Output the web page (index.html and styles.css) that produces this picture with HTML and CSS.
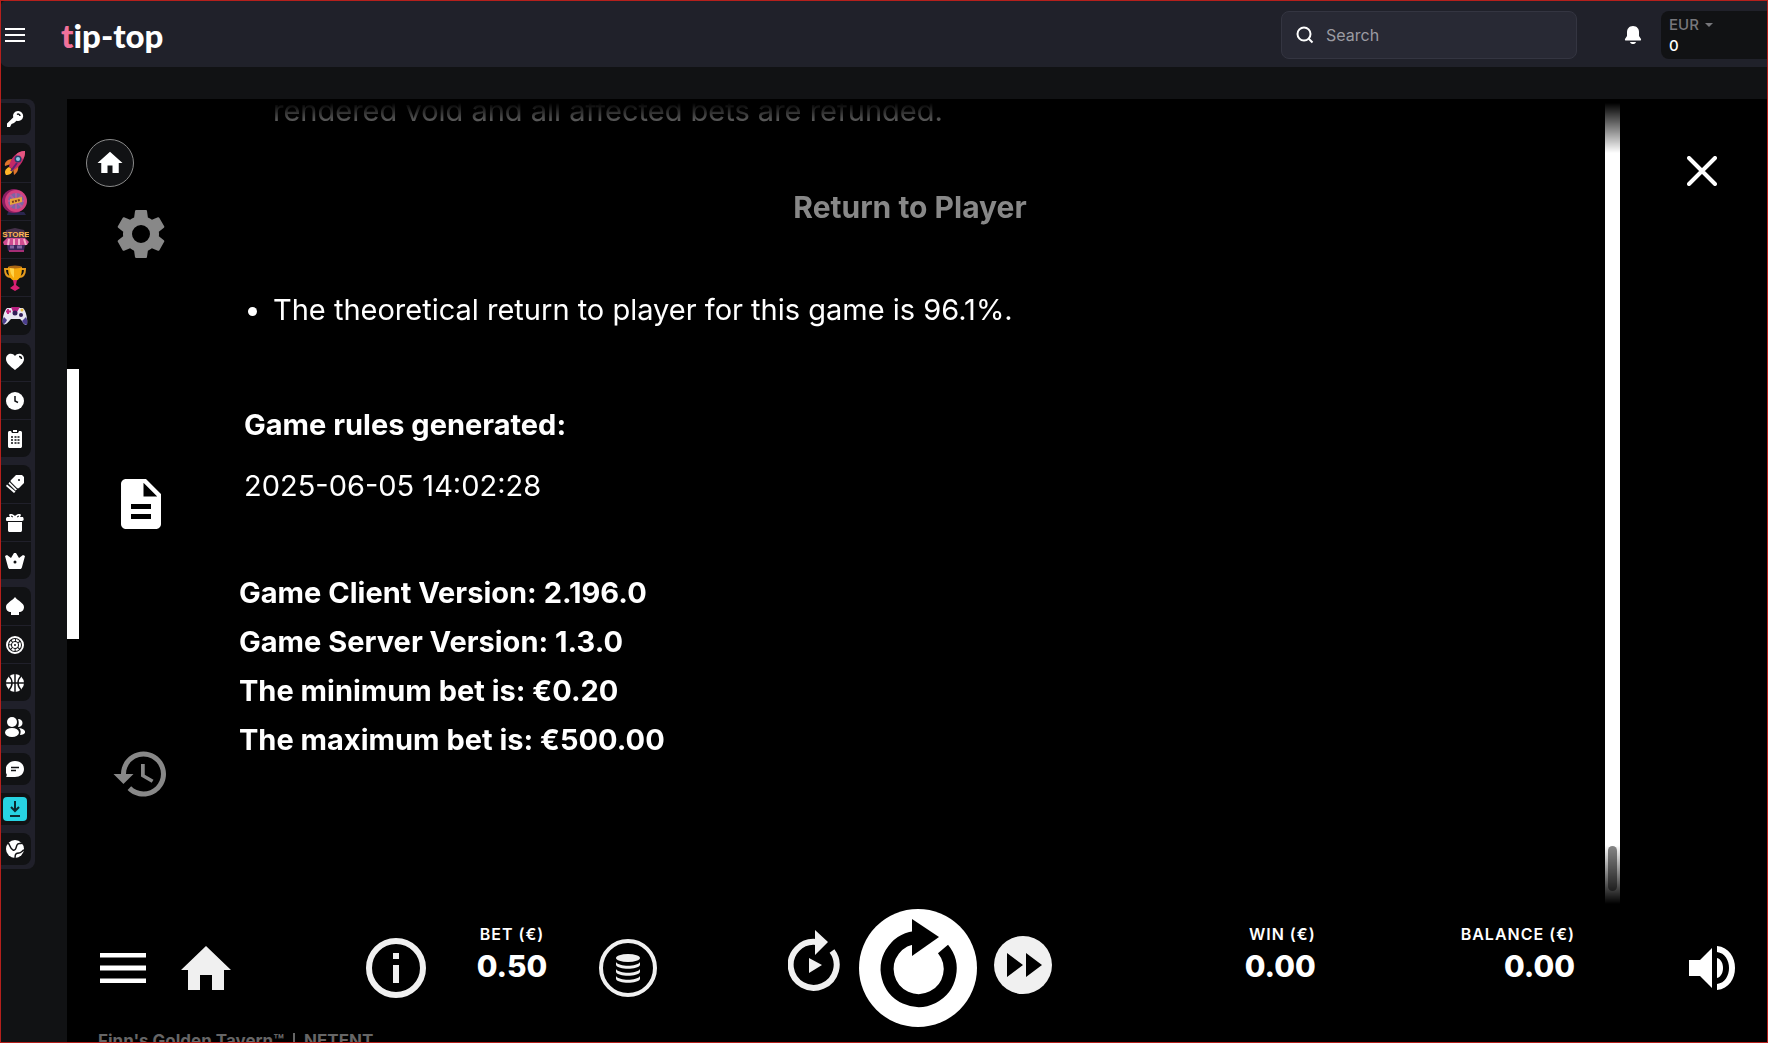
FILE: index.html
```html
<!DOCTYPE html>
<html lang="en">
<head>
    <meta charset="UTF-8">
    <title>tip-top</title>
    <link rel="stylesheet" href="styles.css">
</head>
<body>

<header class="header">
    <button class="menu-btn" aria-label="Menu">
        <svg width="20" height="14" viewBox="0 0 20 14"><path d="M0 1h20M0 7h20M0 13h20" stroke="#fff" stroke-width="2"/></svg>
    </button>
    <a class="logo" href="#"><span class="logo-t">t</span>ip-top</a>
    <label class="search">
        <svg width="18" height="18" viewBox="0 0 18 18" fill="none" stroke="#fff" stroke-width="2"><circle cx="8" cy="8" r="6.5"/><path d="M12.5 12.5l4 4"/></svg>
        <input type="text" placeholder="Search" aria-label="Search">
    </label>
    <button class="bell" aria-label="Notifications">
        <svg width="18" height="20" viewBox="0 0 18 20" fill="#fff"><path d="M9 1c-4 0-6 3-6 6v4l-2 3c-.3 1 .2 1.500 1 1.500h14c.8 0 1.300-.5 1-1.500l-2-3V7c0-3-2-6-6-6zM6 17h6c-.5 1.500-1.500 2-3 2s-2.500-.5-3-2z"/></svg>
    </button>
    <button class="wallet">
        <span class="currency">EUR <svg width="8" height="4" viewBox="0 0 8 4"><path d="M0 0h8L4 4z" fill="#77777b"/></svg></span>
        <span class="amount">0</span>
    </button>
</header>

<div class="main">
    <nav class="sidebar">
        <div class="group single">
            <a href="#" aria-label="Login"><svg width="20" height="20" viewBox="0 0 20 20"><path d="M13 2a5 5 0 0 0-4.800 6.500L2 14.500V18h3l1.500-3 2.500-1 2.500-2.300A5 5 0 1 0 13 2z" fill="#fff"/><path d="M12 5.500c1.500-1 3 0 3 1.500" stroke="#111214" stroke-width="1.500" fill="none"/></svg></a>
        </div>
        <div class="group promo">
            <a href="#" aria-label="Quests"><svg width="22" height="26" viewBox="0 0 22 26">
                <path d="M8 9C3 9 0 13 1 16l6-2zM14 15c1 5-1 8-4 10l-1-7z" fill="#e0742c"/>
                <path d="M21 1C13 1 6 8 5 17l5 3c7-4 11-11 11-19z" fill="#c42a68"/>
                <path d="M21 1c-4 0-7 1-9 4l7 4c2-3 2-5 2-8z" fill="#e55580"/>
                <circle cx="14" cy="9" r="3.500" fill="#27406c"/><circle cx="14" cy="9" r="2" fill="#8cc9e8"/>
                <path d="M5 17l4 3c-1 4-4 5-7 5-2-3-1-6 3-8z" fill="#ffb629"/>
                <path d="M13 13l-6 8" stroke="#5b2272" stroke-width="2"/>
            </svg></a>
            <a href="#" aria-label="Wheel"><svg width="26" height="28" viewBox="0 0 26 28">
                <path d="M6 24h16l2 3H5z" fill="#29264d"/>
                <circle cx="12" cy="13" r="12" fill="#8c1e62"/><circle cx="14" cy="13" r="11" fill="#d3427f"/>
                <circle cx="14" cy="13" r="8" fill="#7b67a3"/>
                <path d="M14 5v16M6 13h16M8 7l12 12M20 7L8 19" stroke="#b25b9f" stroke-width="2"/>
                <path d="M8 11l12-2v5L8 17z" fill="#e8a63b"/><path d="M10 14l8-2" stroke="#7a3c22" stroke-width="2" stroke-dasharray="2 1"/>
            </svg></a>
            <a href="#" aria-label="Store"><svg class="store" width="28" height="26" viewBox="0 0 28 26">
                <path d="M5 12h20l-2 12H7z" fill="#3b275c"/><path d="M2 15l4-4h18l4 4-2 3H3z" fill="#d04c91"/>
                <path d="M8 12l-1 6M13 12v6M18 12v6M23 12l2 6" stroke="#f3b0c9" stroke-width="2"/>
                <path d="M8 24h15" stroke="#a52e75" stroke-width="2"/><path d="M9 20h4M16 20h5" stroke="#83639f" stroke-width="3"/>
                <path d="M5 3l9-2 9 2 3 8H3z" fill="#45304a"/>
                <text x="15" y="10" text-anchor="middle" fill="#ffb751">STORE</text>
            </svg></a>
            <a href="#" aria-label="Tournaments"><svg width="22" height="26" viewBox="0 0 22 26">
                <path d="M5 4H1c0 5 2 8 6 8M17 4h4c0 5-2 8-6 8" fill="none" stroke="#e49a20" stroke-width="2"/>
                <path d="M4 2h14c0 8-2 13-7 14C6 15 4 10 4 2z" fill="#f6a90c"/><path d="M6 3h4v10C7 10 6 7 6 3z" fill="#ffd348"/>
                <ellipse cx="11" cy="2" rx="7" ry="1.500" fill="#a96614"/>
                <path d="M9 15h4l-1 5 4 3-5 3-5-3 4-3z" fill="#d81f72"/>
            </svg></a>
            <a href="#" aria-label="Games"><svg width="26" height="20" viewBox="0 0 26 20">
                <path d="M5 2h16c3 3 5 11 4 17-3 1-5-5-7-6H9c-2 2-5 7-8 5C0 12 2 5 5 2z" fill="#e8e6f1"/>
                <path d="M9 1h9l-3 5h-4z" fill="#b5227f"/><path d="M24 11c2 3 1 7 1 8-2 0-4-2-5-4zM2 11c-2 3-1 6-1 7 2 0 3-2 4-4z" fill="#4b3e8d"/>
                <circle cx="13" cy="7" r="2.500" fill="#311d58"/><circle cx="19" cy="9" r="2" fill="#311d58"/>
                <path d="M6 3v5M4 5.500h5" stroke="#c62a86" stroke-width="2"/><circle cx="20" cy="4" r="1.500" fill="#e8bd3d"/>
            </svg></a>
        </div>
        <div class="group">
            <a href="#" aria-label="Favourites"><svg width="20" height="18" viewBox="0 0 20 18"><path d="M10 17C5 13 1 10 1 6c0-5 6-7 9-3 3-4 9-2 9 3 0 4-4 7-9 11z" fill="#fff"/><path d="M14 3.500c1.500 0 2.500 1 2.500 2.500" stroke="#111214" stroke-width="1.500" fill="none"/></svg></a>
            <a href="#" aria-label="Recent"><svg width="18" height="18" viewBox="0 0 18 18"><circle cx="9" cy="9" r="9" fill="#fff"/><path d="M9 4v5l3 1.500" stroke="#111214" stroke-width="1.500" fill="none"/></svg></a>
            <a href="#" aria-label="History"><svg width="16" height="18" viewBox="0 0 16 18"><path d="M3 1h1l1 2h6l1-2h1c1.500 0 2 .5 2 2v13c0 1.500-.5 2-2 2H3c-1.500 0-2-.5-2-2V3c0-1.500.5-2 2-2zM6 0h4v2H6z" fill="#fff"/><path d="M4 7h2M7.500 7h5M4 10h2M7.500 10h5M4 13h2M7.500 13h5" stroke="#111214" stroke-width="1.500" stroke-dasharray="2 1"/></svg></a>
        </div>
        <div class="group">
            <a href="#" aria-label="Promotions"><svg width="18" height="18" viewBox="0 0 18 18" fill="#fff"><path d="M10 0h6l2 2v6l-5 5c-.6.600-1.400.600-2 0L5 7c-.6-.6-.6-1.400 0-2zM3.500 7l7.500 7.500-1.500 1L2.500 8.500zM1 9.500l8.500 7-1.500 1.500-8-7z"/><circle cx="13" cy="5" r="1" fill="#111214"/></svg></a>
            <a href="#" aria-label="Gifts"><svg width="18" height="18" viewBox="0 0 18 18" fill="#fff"><path d="M2 8h14v8c0 1.500-.5 2-2 2H4c-1.500 0-2-.5-2-2zM1 3h3l-1-2c1-2 4-1 6 1 2-2 5-3 6-1l-1 2h3c1 2 1 4-1 4H1C-.5 7-.5 4 1 3z"/><path d="M5 2l2 1M13 2l-2 1" stroke="#111214"/></svg></a>
            <a href="#" aria-label="VIP"><svg width="20" height="16" viewBox="0 0 20 16"><path d="M0 3l2-1 4 3 3-5h2l3 5 4-3 2 1-3 11c-.3 1.500-1 2-2 2H5c-1 0-1.700-.5-2-2z" fill="#fff"/><circle cx="10" cy="9" r="1.500" fill="#111214"/></svg></a>
        </div>
        <div class="group">
            <a href="#" aria-label="Casino"><svg width="18" height="18" viewBox="0 0 18 18"><path d="M9 0c3 4 9 6 9 10 0 3-2 5-5 5v3H5v-3c-3 0-5-2-5-5 0-4 6-6 9-10z" fill="#fff"/></svg></a>
            <a href="#" aria-label="Live casino"><svg width="18" height="18" viewBox="0 0 18 18" fill="none" stroke="#fff"><circle cx="9" cy="9" r="8" stroke-width="2"/><circle cx="9" cy="9" r="5" stroke-width="2" stroke-dasharray="3 1"/><circle cx="9" cy="9" r="2" stroke-width="2"/></svg></a>
            <a href="#" aria-label="Sport"><svg width="18" height="18" viewBox="0 0 18 18"><circle cx="9" cy="9" r="9" fill="#fff"/><path d="M9 0v18M0 9h18M3 2c4 4 4 10 0 14M15 2c-4 4-4 10 0 14" stroke="#111214" stroke-width="1.500" fill="none"/></svg></a>
        </div>
        <div class="group single tall">
            <a href="#" aria-label="Friends"><svg width="20" height="20" viewBox="0 0 20 20" fill="#fff"><circle cx="7" cy="5" r="5"/><ellipse cx="7" cy="15.500" rx="7" ry="4.500"/><path d="M13 2c6 0 6 8 0 8 1-3 1-5 0-8zM14 11c8 1 8 7 1 7 1-3 1-5-1-7z"/></svg></a>
        </div>
        <div class="group single">
            <a href="#" aria-label="Chat"><svg width="18" height="18" viewBox="0 0 18 18"><path d="M9 1c5 0 9 3 9 8s-4 8-9 8H1c-1 0-1-1 0-2-4-7 1-14 8-14z" fill="#fff"/><path d="M5 7.500h8M5 10.500h5" stroke="#111214" stroke-width="1.500"/></svg></a>
        </div>
        <div class="group single">
            <a class="download" href="#" aria-label="Download"><svg width="12" height="16" viewBox="0 0 12 16" fill="none" stroke="#0c2b30" stroke-width="2"><path d="M6 0v10M2 6l4 4 4-4M1 15h10"/></svg></a>
        </div>
        <div class="group single">
            <a href="#" aria-label="Language"><svg width="18" height="18" viewBox="0 0 18 18"><circle cx="9" cy="9" r="9" fill="#fff"/><path d="M2 3c2 1 2 6 5 7s3-3 4-5 3-1 5-2M9 18c0-5 2-5 4-5s3-2 5-3" stroke="#111214" stroke-width="1.500" fill="none"/></svg></a>
        </div>
    </nav>

    <main class="game">
        <button class="home-round" aria-label="Home">
            <svg width="30" height="30" viewBox="0 0 24 24" fill="#fff"><path d="M10 20v-6h4v6h5v-8h3L12 3 2 12h3v8z"/></svg>
        </button>

        <div class="stage">
            <div class="tabs">
                <button class="tab" aria-label="Settings"><svg width="60" height="60" viewBox="0 0 24 24"><path d="M19.140 12.940c.04-.3.060-.61.060-.94 0-.32-.02-.64-.07-.94l2.030-1.580c.18-.14.230-.41.120-.61l-1.920-3.320c-.12-.22-.37-.29-.59-.22l-2.390.960c-.5-.38-1.030-.7-1.620-.94l-.36-2.540c-.04-.24-.24-.41-.48-.41h-3.840c-.24 0-.43.170-.47.410l-.36 2.540c-.59.240-1.130.570-1.620.940l-2.390-.96c-.22-.08-.47 0-.59.220L2.740 8.870c-.12.210-.08.470.120.610l2.030 1.580c-.05.300-.09.630-.09.940s.02.640.070.940l-2.030 1.580c-.18.140-.23.410-.12.610l1.920 3.320c.12.220.370.290.590.220l2.390-.96c.5.380 1.030.700 1.620.940l.36 2.540c.05.240.240.410.480.410h3.840c.24 0 .44-.17.470-.41l.36-2.540c.59-.24 1.130-.56 1.620-.94l2.390.960c.22.080.470 0 .59-.22l1.920-3.320c.12-.22.070-.47-.12-.61l-2.010-1.580zM12 15.600A3.600 3.600 0 1 1 12 8.400a3.600 3.600 0 0 1 0 7.200z"/></svg></button>
                <button class="tab active" aria-label="Game rules"><svg width="60" height="60" viewBox="0 0 24 24"><path d="M14 2H6c-1.100 0-1.990.900-1.990 2L4 20c0 1.100.890 2 1.990 2H18c1.100 0 2-.9 2-2V8l-6-6zm2 16H8v-2h8v2zm0-4H8v-2h8v2zm-3-5V3.500L18.500 9H13z"/></svg></button>
                <button class="tab" aria-label="Game history"><svg width="60" height="60" viewBox="0 0 24 24"><path d="M13 3c-4.970 0-9 4.030-9 9H1l3.890 3.890.07.140L9 12H6c0-3.870 3.130-7 7-7s7 3.130 7 7-3.130 7-7 7c-1.930 0-3.680-.79-4.940-2.060l-1.420 1.420C8.270 19.990 10.510 21 13 21c4.970 0 9-4.030 9-9s-4.030-9-9-9zm-1 5v5l4.280 2.540.72-1.210-3.500-2.080V8H12z"/></svg></button>
            </div>

            <div class="rules">
                <div class="rules-text">
                    <ul>
                        <li class="plain">rendered void and all affected bets are refunded.</li>
                    </ul>
                    <h2>Return to Player</h2>
                    <ul>
                        <li>The theoretical return to player for this game is 96.1%.</li>
                    </ul>
                    <div class="generated">
                        <h3>Game rules generated:</h3>
                        <p>2025-06-05 14:02:28</p>
                    </div>
                    <div class="versions">
                        <div>Game Client Version: 2.196.0</div>
                        <div>Game Server Version: 1.3.0</div>
                        <div>The minimum bet is: €0.20</div>
                        <div>The maximum bet is: €500.00</div>
                    </div>
                </div>
                <div class="track"><div class="thumb"></div></div>
            </div>

            <div class="close-col">
                <button class="close" aria-label="Close"><svg width="30" height="30" viewBox="0 0 30 30"><path d="M2 2l26 26M28 2L2 28" stroke="#fff" stroke-width="4" stroke-linecap="round"/></svg></button>
            </div>
        </div>

        <div class="controls">
            <div class="left">
                <button aria-label="Menu"><svg width="46" height="30" viewBox="0 0 46 30"><path d="M0 2h46M0 15h46M0 28h46" stroke="#fff" stroke-width="5"/></svg></button>
                <button class="go-home" aria-label="Home"><svg width="50" height="44" viewBox="0 0 50 44"><path d="M25 0l25 24h-7v20H31V29H19v15H7V24H0z" fill="#f0f0f0"/></svg></button>
                <button class="info" aria-label="Info"><svg width="60" height="60" viewBox="0 0 60 60"><circle cx="30" cy="30" r="27" fill="none" stroke="#f0f0f0" stroke-width="6"/><path d="M27 15h6v6h-6zM27 27h6v18h-6z" fill="#f0f0f0"/></svg></button>
                <div class="stat bet"><span>BET (€)</span><b>0.50</b></div>
                <button aria-label="Bet size"><svg width="60" height="60" viewBox="0 0 60 60"><circle cx="30" cy="30" r="27" fill="none" stroke="#f0f0f0" stroke-width="4"/><ellipse cx="30" cy="20" rx="12" ry="4" fill="#f0f0f0"/><path d="M18 24c3 5 21 5 24 0v3c-2 5-22 5-24 0zM18 31c3 5 21 5 24 0v3c-2 5-22 5-24 0zM18 38c3 5 21 5 24 0v3c-2 5-22 5-24 0z" fill="#f0f0f0"/></svg></button>
            </div>
            <div class="center">
                <button class="auto" aria-label="Autoplay"><svg width="52" height="62" viewBox="0 0 52 62"><path d="M28 12A23 23 0 1 0 44 21" fill="none" stroke="#f0f0f0" stroke-width="6"/><path d="M27 0l13 12-13 13zM21 28l13 7-13 8z" fill="#f0f0f0"/></svg></button>
                <button aria-label="Spin"><svg width="118" height="118" viewBox="0 0 118 118"><circle cx="59" cy="59" r="59" fill="#fff"/><path d="M59 28.500A31.500 31.500 0 1 0 84 40" fill="none" stroke="#000" stroke-width="13"/><path d="M53 10l27 18-27 19z"/></svg></button>
                <button class="fast" aria-label="Fast play"><svg width="60" height="60" viewBox="0 0 60 60"><circle cx="30" cy="30" r="29" fill="#f0f0f0"/><path d="M14 18l16 12-16 12zM33 18l16 12-16 12z"/></svg></button>
            </div>
            <div class="right">
                <div class="stat win"><span>WIN (€)</span><b>0.00</b></div>
                <div class="stat balance"><span>BALANCE (€)</span><b>0.00</b></div>
                <button aria-label="Sound"><svg width="46" height="44" viewBox="0 0 46 44" fill="#fff"><path d="M0 14h11L23 2v40L11 30H0zM28 12c8 2 8 18 0 20zM28 0c24 2 24 42 0 44v-6c16-2 16-30 0-32z"/></svg></button>
            </div>
        </div>
        <div class="caption">Finn's Golden Tavern™ <i></i> NETENT</div>
    </main>
</div>

</body>
</html>
```
FILE: styles.css
```css
* {
    box-sizing: border-box;
}

body {
    margin: 0;
    height: 100vh;
    display: flex;
    flex-direction: column;
    overflow: hidden;
    background: #111214;
    color: #fff;
    font-family: Inter, "Liberation Sans", sans-serif;
}

/* thin red frame over the whole window */
body::after {
    content: "";
    position: fixed;
    inset: 0;
    border: 1px solid #b5201c;
    pointer-events: none;
}

button {
    padding: 0;
    border: 0;
    background: none;
    color: inherit;
    font: inherit;
    cursor: pointer;
}

svg {
    display: block;
}

h2, h3, p, ul {
    margin: 0;
    padding: 0;
}

/* header */
.header {
    flex: none;
    height: 67px;
    display: flex;
    align-items: center;
    padding: 3px 0 0 5px;
    background: #20212a;
    border-radius: 8px 0 0 8px;
}

.logo {
    margin-left: 36px;
    color: #fff;
    font-family: Lato, sans-serif;
    font-size: 33px;
    font-weight: 900;
    font-variant-ligatures: none;
    line-height: 40px;
    text-decoration: none;
}

.logo-t {
    color: #f0719b;
}

.search {
    width: 296px;
    height: 48px;
    display: flex;
    align-items: center;
    gap: 10px;
    margin-left: auto;
    padding: 0 14px;
    border: 1px solid #343541;
    border-radius: 8px;
    background: #282934;
}

.search input {
    flex: 1;
    min-width: 0;
    border: 0;
    outline: 0;
    background: none;
    color: #fff;
    font: 16px Inter, sans-serif;
}

.search input::placeholder {
    color: #9b9ba2;
}

.bell {
    margin: 0 19px 0 47px;
}

.wallet {
    width: 107px;
    height: 48px;
    padding-left: 8px;
    border-radius: 8px 0 0 8px;
    background: #111214;
    text-align: left;
    font-size: 15px;
    font-weight: 500;
    line-height: 21px;
}

.currency {
    display: flex;
    align-items: center;
    gap: 6px;
    color: #77777b;
}

/* side menu */
.main {
    flex: 1;
    min-height: 0;
    display: flex;
    align-items: flex-start;
    padding-top: 32px;
}

.sidebar {
    width: 35px;
    display: flex;
    flex-direction: column;
    gap: 8px;
    margin-right: 32px;
    padding: 4px 4px 4px 0;
    border-radius: 0 8px 8px 0;
    background: #20202a;
}

.group {
    border-radius: 0 8px 8px 0;
    background: #111214;
}

.group a {
    height: 38px;
    display: flex;
    align-items: center;
    justify-content: center;
    padding-right: 1px;
}

.group a + a {
    border-top: 1px solid #20202a;
}

.group.promo {
    padding: 1px 0;
}

.group.single a {
    height: 32px;
}

.group.tall a {
    height: 36px;
}

.store text {
    font: bold 8px "Liberation Sans", sans-serif;
}

.group.single .download {
    width: 24px;
    height: 24px;
    margin: 4px 3px;
    padding: 0;
    border-radius: 4px;
    background: #27d3e2;
}

/* game window */
.game {
    flex: 1;
    align-self: stretch;
    min-width: 0;
    display: flex;
    flex-direction: column;
    position: relative;
    background: #000;
}

.home-round {
    position: absolute;
    left: 19px;
    top: 40px;
    width: 48px;
    height: 48px;
    display: flex;
    align-items: center;
    justify-content: center;
    border: 1px solid #8a8a8a;
    border-radius: 50%;
    background: #111214;
}

.stage {
    flex: 1;
    min-height: 0;
    display: flex;
}

.tabs {
    width: 148px;
    display: flex;
    flex-direction: column;
}

.tab {
    flex: 1;
    display: flex;
    align-items: center;
    justify-content: center;
    border: solid transparent;
    border-width: 0 12px;
    fill: #888;
}

.tab.active {
    border-left-color: #fff;
    fill: #fff;
}

.rules {
    flex: 1;
    min-width: 0;
    display: flex;
    mask-image: linear-gradient(transparent 4px, #000 54px, #000 calc(100% - 64px), transparent calc(100% - 5px));
}

/* scrolled to the end, so the text sits on the bottom edge */
.rules-text {
    flex: 1;
    display: flex;
    flex-direction: column;
    justify-content: flex-end;
    overflow: hidden;
    padding: 0 24px 145px;
    font-size: 29px;
    line-height: 49px;
}

.rules-text ul {
    padding-left: 34px;
}

.rules-text .plain {
    list-style: none;
}

.rules-text h2 {
    margin: 48px 0 53px;
    color: #888;
    font-size: 30px;
    font-weight: 700;
    text-align: center;
}

.generated {
    display: flex;
    flex-direction: column;
    gap: 12px;
    margin: 66px 0 58px;
    padding-left: 5px;
}

.generated h3 {
    font-size: 29px;
    font-weight: 700;
}

.versions {
    font-weight: 700;
}

.track {
    width: 15px;
    display: flex;
    align-items: flex-end;
    justify-content: center;
    padding-bottom: 18px;
    background: #fff;
}

.thumb {
    width: 9px;
    height: 45px;
    border-radius: 5px;
    background: #888;
}

.close-col {
    width: 148px;
    display: flex;
    justify-content: center;
    align-items: flex-start;
    padding: 57px 0 0 16px;
}

/* bottom bar */
.controls {
    height: 118px;
    display: grid;
    grid-template-columns: 1fr auto 1fr;
    align-items: center;
}

.left, .center, .right {
    display: flex;
    align-items: center;
}

.left {
    padding-left: 33px;
}

.go-home {
    margin-left: 35px;
}

.info {
    margin-left: 135px;
}

.stat {
    display: flex;
    flex-direction: column;
    padding-bottom: 28px;
}

.stat span {
    font-size: 16px;
    font-weight: 600;
    line-height: 24px;
    letter-spacing: 1px;
}

.stat b {
    font-size: 30px;
    font-weight: 800;
    line-height: 40px;
}

.bet {
    width: 172px;
    align-items: center;
}

.center {
    gap: 16px;
}

.auto {
    margin: 0 3px 0 5px;
    padding-bottom: 14px;
}

.fast {
    padding-bottom: 6px;
}

.right {
    justify-content: flex-end;
    padding-right: 33px;
}

.win, .balance {
    align-items: flex-end;
}

.balance {
    margin: 0 114px 0 145px;
}

.caption {
    height: 16px;
    padding: 4px 31px 0;
    overflow: hidden;
    color: #666;
    font-size: 17px;
    font-weight: 700;
    line-height: 20px;
}

.caption i {
    display: inline-block;
    width: 2px;
    height: 18px;
    margin: 0 5px;
    background: #666;
    vertical-align: middle;
}
```
